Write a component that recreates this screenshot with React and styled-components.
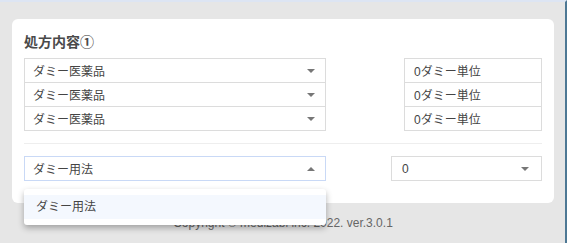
import React from 'react';
import styled, { createGlobalStyle } from 'styled-components';

const GlobalStyle = createGlobalStyle`
  html, body {
    margin: 0;
    padding: 0;
    background: #e6e6e6;
  }
  body {
    font-family: "Liberation Sans", "Noto Sans CJK JP", sans-serif;
    color: #444;
  }
`;

const Page = styled.div`
  position: relative;
  min-height: 243px;
  box-sizing: border-box;
  border-top: 2px solid #dde5f3;
  border-right: 2px solid #4d7894;
  padding: 17px 11px 0 12px;
`;

const Card = styled.section`
  background: #fff;
  border-radius: 6px;
  padding: 13px 12px 22px;
`;

const Title = styled.h2`
  margin: 0 0 6px;
  font-size: 14px;
  line-height: 20px;
  font-weight: bold;
  color: #4a4a4a;
`;

const Rows = styled.div`
  display: flex;
  flex-direction: column;
`;

const Row = styled.div`
  display: flex;
  justify-content: space-between;
  & + & {
    margin-top: -1px;
  }
`;

const Box = styled.div`
  position: relative;
  box-sizing: border-box;
  height: 25px;
  width: ${(p) => p.$width}px;
  border: 1px solid ${(p) => (p.$focused ? '#c9d9f6' : '#dcdcdc')};
  background: #fff;
  display: flex;
  align-items: center;
  padding: 0 ${(p) => p.$pad ?? 9}px;
  font-size: 12px;
  color: #444;
`;

const Value = styled.span`
  flex: 1;
  white-space: nowrap;
`;

const Caret = styled.span`
  width: 0;
  height: 0;
  border-left: 4px solid transparent;
  border-right: 4px solid transparent;
  ${(p) =>
    p.$up
      ? 'border-bottom: 4px solid #777;'
      : 'border-top: 4px solid #777;'}
  margin-right: 2px;
`;

const Divider = styled.hr`
  border: 0;
  border-top: 1px solid #eee;
  margin: 12px 0 12px;
`;

const SelectWrap = styled.div`
  position: relative;
`;

const Menu = styled.ul`
  position: absolute;
  top: 33px;
  left: 0;
  width: 302px;
  margin: 0;
  padding: 6px 0;
  list-style: none;
  background: #fff;
  border-radius: 3px;
  box-shadow: 0 3px 6px rgba(0, 0, 0, 0.3);
  z-index: 2;
`;

const MenuItem = styled.li`
  height: 24px;
  line-height: 24px;
  padding: 0 12px;
  font-size: 12px;
  color: #444;
  background: ${(p) => (p.$active ? '#f4f8fe' : '#fff')};
`;

const Footer = styled.footer`
  text-align: center;
  font-size: 12px;
  line-height: 16px;
  color: #666;
  margin-top: 12px;
`;

const Select = ({ value, width, open, pad }) => (
  <Box $width={width} $focused={open} $pad={pad}>
    <Value>{value}</Value>
    <Caret $up={open} />
  </Box>
);

const medicines = ['ダミー医薬品', 'ダミー医薬品', 'ダミー医薬品'];

export default function App() {
  return (
    <>
      <GlobalStyle />
      <Page>
        <Card>
          <Title>処方内容①</Title>
          <Rows>
            {medicines.map((m, i) => (
              <Row key={i}>
                <Select value={m} width={302} pad={8} />
                <Box $width={138}>
                  <Value>0ダミー単位</Value>
                </Box>
              </Row>
            ))}
          </Rows>
          <Divider />
          <Row>
            <SelectWrap>
              <Select value="ダミー用法" width={302} pad={8} open />
              <Menu>
                <MenuItem $active>ダミー用法</MenuItem>
              </Menu>
            </SelectWrap>
            <Select value="0" width={151} pad={10} />
          </Row>
        </Card>
        <Footer>Copyright © medizabi inc. 2022. ver.3.0.1</Footer>
      </Page>
    </>
  );
}
